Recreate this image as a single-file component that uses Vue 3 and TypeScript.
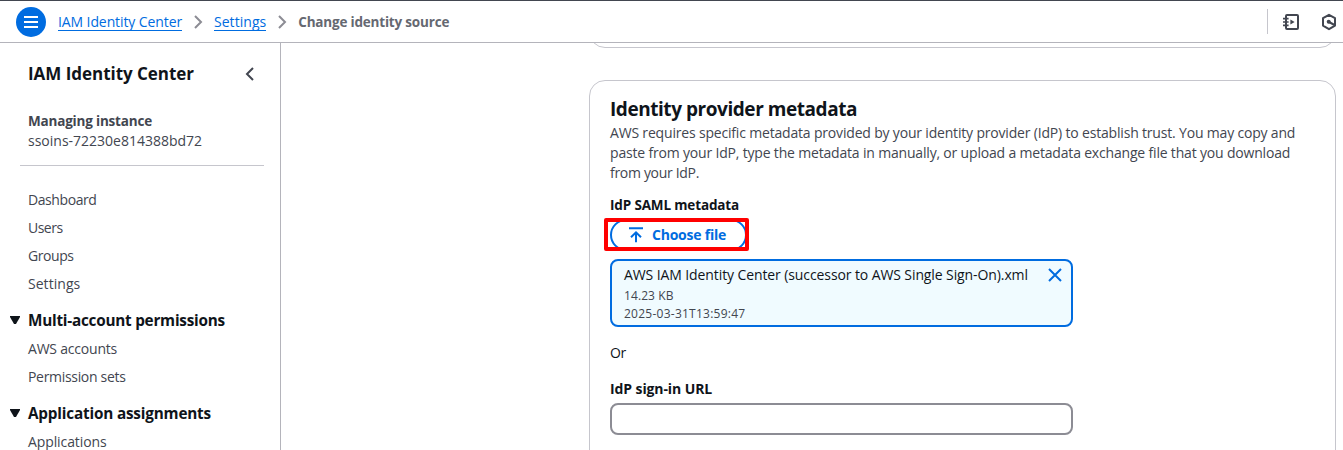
<script setup lang="ts">
interface NavItem { label: string; cls: string }
interface NavSection { title: string; cls: string; items: NavItem[] }

const links: NavItem[] = [
  { label: 'Dashboard', cls: 't-4' },
  { label: 'Users', cls: 't-5' },
  { label: 'Groups', cls: 't-4' },
  { label: 'Settings', cls: 't-0' },
]
const sections: NavSection[] = [
  {
    title: 'Multi-account permissions',
    cls: 'multi',
    items: [
      { label: 'AWS accounts', cls: 't-2' },
      { label: 'Permission sets', cls: 't-3' },
    ],
  },
  {
    title: 'Application assignments',
    cls: 'apps',
    items: [{ label: 'Applications', cls: 't-1' }],
  },
]
</script>

<template>
  <div class="page">
    <header class="topbar">
      <button class="menu" aria-label="Menu">
        <svg width="30" height="30" viewBox="0 0 30 30"><path d="M8 10h14M8 15h14M8 20h14" stroke="#fff" stroke-width="2" /></svg>
      </button>
      <nav class="crumbs">
        <a class="t-1">IAM Identity Center</a>
        <svg class="sep" width="10" height="14" viewBox="0 0 10 14"><path d="M2 1l6 6-6 6" /></svg>
        <a class="t-0">Settings</a>
        <svg class="sep" width="10" height="14" viewBox="0 0 10 14"><path d="M2 1l6 6-6 6" /></svg>
        <span class="current">Change identity source</span>
      </nav>
      <div class="tools">
        <svg width="18" height="18" viewBox="0 0 18 18" fill="none" stroke="#424650" stroke-width="2">
          <rect x="3" y="2" width="12" height="14" rx="1" />
          <path d="M0 5.6h5.6M0 9h5.6M0 12.4h5.6" stroke-width="1.7" />
          <path d="M7.4 6.5v5L11.6 9z" fill="#424650" stroke="none" />
        </svg>
        <svg width="16" height="18" viewBox="0 0 16 18" fill="none" stroke="#424650" stroke-width="2" stroke-linejoin="round">
          <path d="M8 1.8l6 3.4v7.4l-6 3.6-6-3.6V5.2z" />
          <circle cx="7.7" cy="8.8" r="2" fill="#424650" stroke="none" />
          <path d="M8 9l5.5 3" />
        </svg>
      </div>
    </header>

    <div class="body">
      <aside class="side">
        <div class="side-head">
          <h2>IAM Identity Center</h2>
          <svg width="10" height="14" viewBox="0 0 10 14"><path d="M8 1L2 7l6 6" fill="none" stroke="#424650" stroke-width="2" /></svg>
        </div>
        <div class="instance">
          <b>Managing instance</b>
          <span>ssoins-72230e814388bd72</span>
        </div>
        <ul class="links">
          <li v-for="l in links" :key="l.label" :class="l.cls">{{ l.label }}</li>
        </ul>
        <section v-for="s in sections" :key="s.title" class="group">
          <h3 :class="s.cls">
            <svg width="10" height="8" viewBox="0 0 10 8"><path d="M0 0h10v1L6 8H4L0 1z" fill="#0f141a" /></svg>
            {{ s.title }}
          </h3>
          <ul>
            <li v-for="i in s.items" :key="i.label" :class="i.cls">{{ i.label }}</li>
          </ul>
        </section>
      </aside>

      <main class="content">
        <div class="card previous"></div>
        <div class="card">
          <h1>Identity provider metadata</h1>
          <p class="desc">
            AWS requires specific metadata provided by your identity provider (IdP) to establish trust. You may copy and<br />
            paste from your IdP, type the metadata in manually, or upload a metadata exchange file that you download<br />
            <span class="t-3">from your IdP.</span>
          </p>
          <div class="label saml">IdP SAML metadata</div>
          <div class="pick">
            <button class="choose">
              <svg width="16" height="16" viewBox="0 0 16 16" fill="none" stroke="#006ce0" stroke-width="2">
                <path d="M1 1.2h14M8 15.2V6M3 10.2L8 5.4l5 4.8" />
              </svg>
              <span>Choose file</span>
            </button>
            <div class="highlight"></div>
          </div>
          <div class="file">
            <div class="file-text">
              <div class="name">AWS IAM Identity Center (successor to AWS Single Sign-On).xml</div>
              <div class="meta size">14.23 KB</div>
              <div class="meta date">2025-03-31T13:59:47</div>
            </div>
            <svg class="close" width="14" height="14" viewBox="0 0 14 14"><path d="M1 1l12 12M13 1L1 13" stroke="#006ce0" stroke-width="2" /></svg>
          </div>
          <div class="or">Or</div>
          <div class="label url">IdP sign-in URL</div>
          <input class="field" type="text" aria-label="IdP sign-in URL" />
        </div>
      </main>
    </div>
  </div>
</template>

<style>
body { margin: 0; overflow: hidden; }
</style>
<style scoped>
.page { width: 1343px; height: 450px; overflow: hidden; display: flex; flex-direction: column; background: #fff; color: #0f141a; font: 14px/20px "Open Sans", "Noto Sans", sans-serif; }
.page * { box-sizing: border-box; }
h1, h2, h3, p, ul { margin: 0; padding: 0; }
ul { list-style: none; }
svg { display: block; flex: none; }
button { padding: 0; font: inherit; }
.t-0 { letter-spacing: 0.04px; }
.t-1 { letter-spacing: -0.1px; }
.t-2 { letter-spacing: -0.21px; }
.t-3 { letter-spacing: -0.315px; }
.t-4 { letter-spacing: -0.42px; }
.t-5 { letter-spacing: -0.52px; }

.topbar { flex: none; height: 43px; border-top: 1px solid #424650; border-bottom: 1px solid #b4b4bb; display: flex; align-items: center; padding: 0 6px 0 16px; white-space: nowrap; }
.menu { width: 30px; height: 30px; border: 0; border-radius: 50%; background: #006ce0; }
.crumbs { display: flex; align-items: center; margin-left: 12px; }
.crumbs a { height: 18px; line-height: 18px; border-bottom: 1px solid #006ce0; color: #006ce0; }
.crumbs a:first-child { width: 124px; }
.sep { margin: 0 11px; fill: none; stroke: #8c8c94; stroke-width: 2; }
.current { color: #656871; font-weight: 700; font-size: 13.5px; letter-spacing: -0.19px; }
.tools { margin-left: auto; height: 25px; border-left: 1px solid #c6c6cd; padding-left: 15px; display: flex; align-items: center; gap: 20px; }

.body { flex: 1; min-height: 0; display: flex; }
.side { width: 281px; flex: none; border-right: 1px solid #b4b4bb; color: #424650; overflow: hidden; }
.side-head { height: 62px; padding: 0 25px 0 28px; display: flex; align-items: center; justify-content: space-between; }
.side-head h2 { font-size: 17px; line-height: 24px; letter-spacing: -0.03px; color: #0f141a; }
.instance { margin: 0 16px 0 20px; height: 61px; padding: 6px 8px 0; border-bottom: 1px solid #c6c6cd; display: flex; flex-direction: column; }
.instance b { font-size: 13.5px; letter-spacing: -0.19px; }
.links { padding: 20px 0 0 28px; }
li { height: 28px; line-height: 28px; }
.group h3 { height: 29px; padding-bottom: 1px; margin-top: 8px; display: flex; align-items: center; gap: 8px; padding-left: 10px; font-size: 15.3px; color: #0f141a; white-space: nowrap; }
.group h3.multi { letter-spacing: -0.24px; }
.group h3.apps { letter-spacing: -0.19px; }
.group ul { padding-left: 28px; }

.content { flex: 1; min-width: 0; padding: 0 7px 0 308px; overflow: hidden; }
.card { height: 400px; border: 1px solid #c6c6cd; border-radius: 16px; padding: 15px 20px; }
.previous { height: 40px; margin: -35px 0 32px; padding: 0; }
h1 { font-size: 19px; line-height: 27px; letter-spacing: -0.45px; }
.desc { color: #424650; white-space: nowrap; letter-spacing: -0.181px; }
.label { font-weight: 700; font-size: 13.5px; }
.saml { margin-top: 12px; letter-spacing: -0.15px; }
.pick { position: relative; margin-top: 4px; height: 32px; width: 137px; }
.choose { width: 137px; height: 32px; border: 2px solid #006ce0; border-radius: 16px; background: #fff; color: #006ce0; font-weight: 700; display: flex; align-items: center; padding-left: 16px; gap: 8px; letter-spacing: -0.23px; white-space: nowrap; }
.highlight { position: absolute; left: -6px; top: -1px; width: 145px; height: 33px; border: 4px solid #f00; border-radius: 2px; }
.file { width: 463px; height: 68px; margin-top: 8px; border: 2px solid #006ce0; border-radius: 8px; background: #f0fbff; padding: 4px 9px 0 12px; display: flex; justify-content: space-between; white-space: nowrap; }
.name { letter-spacing: -0.1px; }
.close { margin-top: 3px; }
.meta { font-size: 12px; line-height: 18px; color: #424650; }
.size { letter-spacing: 0.086px; margin-top: 2px; }
.date { letter-spacing: 0.25px; }
.or { margin-top: 16px; letter-spacing: -0.3px; }
.url { margin-top: 16px; letter-spacing: -0.1px; font-size: 14px; }
.field { display: block; width: 463px; height: 32px; margin-top: 4px; border: 2px solid #8c8c94; border-radius: 8px; background: #fff; outline: 0; }
</style>
